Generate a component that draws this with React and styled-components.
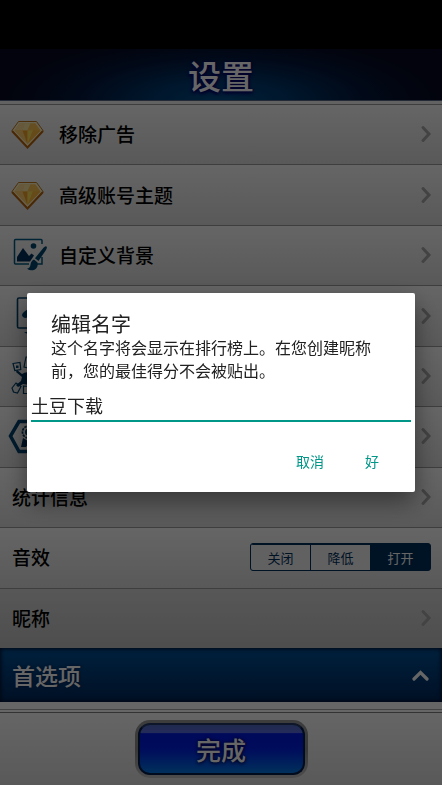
import { useState } from "react";
import styled, { createGlobalStyle } from "styled-components";

const GlobalStyle = createGlobalStyle`
  * {
    box-sizing: border-box;
  }

  body {
    margin: 0;
    background: #fff;
    font-family: "Noto Sans CJK SC", "Noto Sans", sans-serif;
  }

  button, input {
    font-family: inherit;
  }
`;

const Screen = styled.div`
  min-height: 100vh;
  display: flex;
  flex-direction: column;
`;

const StatusBar = styled.div`
  height: 49px;
  background: #000;
`;

const Header = styled.header`
  height: 55px;
  display: flex;
  align-items: center;
  justify-content: center;
  background: radial-gradient(
    ellipse 50% 130% at 50% 100%,
    #00508c,
    #003a70 30%,
    #04173c 65%,
    #06081e 100%
  );
  border-bottom: 3px solid #f4f4f4;
  box-shadow: inset 0 -1px 0 #5a6c88;
`;

const Title = styled.h1`
  margin: 0;
  font-size: 33px;
  font-weight: 500;
  line-height: 48px;
  color: #fff;
  text-shadow: 0 0 3px #00006c, 0 1px 3px #00006c, 0 2px 4px #00006c;
`;

const List = styled.ul`
  flex: 1;
  margin: 0;
  padding: 0;
  list-style: none;
  display: grid;
  grid-auto-rows: minmax(56px, 1fr);
`;

const Row = styled.li`
  display: flex;
  align-items: center;
  padding: 0 11px 1px 12px;
  border-top: 1px solid #9c9c9c;
  background: ${(props) =>
    props.$dim
      ? "linear-gradient(#dadada, #c2c2c2)"
      : "linear-gradient(#fdfdfd, #dedede)"};
`;

const RowLink = styled.a`
  flex: 1;
  display: flex;
  align-items: center;
  color: #000;
  text-decoration: none;
`;

const RowLabel = styled.span`
  flex: 1;
  font-size: 19px;
  font-weight: 500;
  line-height: 28px;
  color: #000;
`;

const IconBox = styled.svg`
  width: 36px;
  height: 36px;
  margin-right: 11px;
  overflow: visible;
  flex-shrink: 0;
`;

const ArrowSvg = styled.svg`
  width: 10px;
  height: 18px;
  overflow: visible;
`;

const Segments = styled.div`
  display: flex;
  width: 181px;
  height: 28px;
  border: 1px solid #00305e;
  border-radius: 3px;
  background: #00305e;
  overflow: hidden;
  gap: 1px;
`;

const Segment = styled.button`
  flex: 1;
  padding: 0;
  border: 1px solid #00305e;
  border-width: 1px 0 0;
  font-size: 13px;
  font-weight: 400;
  line-height: 24px;
  color: ${(props) => (props.$active ? "#fff" : "#00305e")};
  background: ${(props) => (props.$active ? "#00305e" : "#f2f2f2")};
`;

const Section = styled.button`
  height: 54px;
  display: flex;
  align-items: center;
  justify-content: space-between;
  padding: 0 13px 0 12px;
  border: 0;
  background: linear-gradient(#005298, #00285c);
  box-shadow: inset 0 0 4px 1px #001030;
  font-size: 23px;
  font-weight: 500;
  color: #fff;
  text-shadow: 0 0 3px #00184c;
`;

const Footer = styled.footer`
  margin-top: 7px;
  padding-top: 2px;
  border-top: 1px solid #a8a8a8;
`;

const FooterBar = styled.div`
  height: 73px;
  display: flex;
  align-items: center;
  justify-content: center;
  border-top: 1px solid #808080;
  background: linear-gradient(#fdfdfd, #dedede);
`;

const DoneFrame = styled.div`
  padding: 3px;
  border-radius: 15px;
  background: linear-gradient(#9a9a9a, #8c8c8c 50%, #c0c0c0);
`;

const DoneButton = styled.button`
  display: block;
  width: 167px;
  height: 52px;
  padding: 0;
  border: 2px solid #001c4c;
  border-top-color: #223a66;
  border-radius: 12px;
  background: linear-gradient(
    #5068c0,
    #5a6ce0 16%,
    #0018e0 18%,
    #001ee6 50%,
    #0078e4 100%
  );
  font-size: 25px;
  font-weight: 500;
  line-height: 46px;
  color: #fff;
  text-shadow: 0 0 3px #00004c, 0 1px 4px #00004c;
`;

const Scrim = styled.div`
  position: fixed;
  inset: 0;
  display: flex;
  align-items: center;
  justify-content: center;
  padding: 0 27px;
  background: rgba(0, 0, 0, 0.6);
`;

const Dialog = styled.div`
  width: 100%;
  max-width: 560px;
  padding: 18px 4px 12px;
  border-radius: 2px;
  background: #fff;
  box-shadow: 0 10px 24px rgba(0, 0, 0, 0.45);
`;

const DialogText = styled.div`
  padding: 0 20px;
`;

const DialogTitle = styled.h2`
  margin: 0;
  font-size: 20px;
  font-weight: 400;
  line-height: 25px;
  color: #212121;
`;

const Message = styled.p`
  margin: 0;
  font-size: 16px;
  line-height: 23px;
  color: #212121;
`;

const NameInput = styled.input`
  display: block;
  width: 100%;
  height: 32px;
  margin-top: 8px;
  padding: 0;
  border: 0;
  border-bottom: 2px solid #009688;
  border-radius: 0;
  outline: 0;
  background: transparent;
  font-size: 18px;
  color: #212121;
`;

const Actions = styled.div`
  display: flex;
  justify-content: flex-end;
  padding: 21px 8px 1px 0;
`;

const ActionButton = styled.button`
  min-width: 62px;
  height: 36px;
  padding: 0 17px;
  border: 0;
  background: none;
  font-size: 14px;
  color: #009688;
`;

const navy = "#00466f";

function DiamondIcon() {
  return (
    <IconBox viewBox="0 0 36 36" aria-hidden="true">
      <path
        d="M6.500 5.500h18L31 14.500 15.500 31 0 14.500z"
        fill="#fff4cc"
        stroke="#c07818"
      />
      <path d="M7.500 7.500h16l5 7-13 13.500-13-13.500z" fill="#ffc24c" />
      <path d="M7.500 7.500h5l-2 7h-8z" fill="#ffdc94" />
      <path d="M12.500 7.500h6l-3 7h-5z" fill="#ffe8a4" />
      <path d="M18.500 7.500h5l-2.500 7h-5.500z" fill="#ffc458" />
      <path d="M2.500 14.500h8l5 13.500z" fill="#ffd070" />
      <path d="M10.500 14.500h5V28z" fill="#f4a42c" />
      <path d="M15.500 14.500H21L15.500 28z" fill="#ffe058" />
      <path d="M21 14.500h7.500l-13 13.500z" fill="#ffb83c" />
      <path
        d="M0 15l15.500 16.500L31 15"
        fill="none"
        stroke="#b86408"
        strokeWidth="2"
      />
    </IconBox>
  );
}

function BackgroundIcon() {
  return (
    <IconBox viewBox="0 0 36 36" aria-hidden="true">
      <path
        d="M30 7V3.500Q30 2.500 29 2.500H3.500Q2.500 2.500 2.500 3.500V26Q2.500 27 3.500 27H17"
        fill="none"
        stroke="#005a80"
        strokeWidth="1.500"
      />
      <path d="M30 20v7h-5" fill="none" stroke="#005a80" strokeWidth="1.500" />
      <circle cx="21.500" cy="9" r="2.800" fill={navy} />
      <path d="M5 24.500V20l6-9 6 8 2.500-2.500 2.500 2-4 6z" fill="#00305e" />
      <path
        d="M34.500 9.500q1 1-.5 3.500l-7.500 11-3.500-2.800 8.500-10.500q2-2.200 3-1.200z"
        fill={navy}
      />
      <path
        d="M22 22.500l3.500 3q1 5-3 7.200-4 1.700-7.500-1 3-.7 3.500-4 .5-4 3.500-5.200z"
        fill={navy}
      />
    </IconBox>
  );
}

function CardBackIcon() {
  return (
    <IconBox viewBox="0 0 36 36" aria-hidden="true">
      <rect
        x="5.500"
        y="0"
        width="27"
        height="30"
        rx="1.500"
        fill="none"
        stroke="#00406a"
        strokeWidth="1.600"
      />
      <path
        d="M19 7q-2 4-6.500 6.500-4 3-1.500 5.500 3 2 6-.5l-1 4h6l-1-4q3 2.500 6 .5 2.500-2.500-1.500-5.500Q21 11 19 7z"
        fill={navy}
      />
      <path d="M12 34.500l4-1v2.500z" fill={navy} />
    </IconBox>
  );
}

function PlayersIcon() {
  return (
    <IconBox viewBox="0 0 36 36" aria-hidden="true">
      <g fill="none" stroke="#00406a" strokeWidth="1.200">
        <path d="M1 5.500l7-1 .8 7-6 1z" />
        <path d="M0 30l4-5 5 3.500-3.500 6.500-4-1z" />
        <path d="M11.500 28l7 .5v7h-7z" />
        <path d="M12 9l2-10h7v12z" />
      </g>
      <path d="M4 7.500h2.500V10H4z" fill={navy} />
      <path
        d="M5 12l5 4q4-3 9-1l6-5 2 3-6 6v6l5 6-3 2-6-6-6-1-5 3-2-2 5-4 1-4-6-5z"
        fill="#00365e"
      />
    </IconBox>
  );
}

function BadgeIcon() {
  return (
    <IconBox viewBox="0 0 36 36" aria-hidden="true">
      <path
        d="M7 3.500h19L35 18l-9 15.500H7L-1.500 18z"
        fill="none"
        stroke="#004472"
        strokeWidth="3.500"
      />
      <circle
        cx="16.500"
        cy="14"
        r="6"
        fill="none"
        stroke="#00365e"
        strokeWidth="1.800"
        strokeDasharray="2.500 .8"
      />
      <circle cx="16.500" cy="14" r="3.500" fill={navy} />
      <path d="M11 20l5 3 6-3 3 9h-5l-3-4-3 4H9z" fill="#00305e" />
    </IconBox>
  );
}

function Arrow() {
  return (
    <ArrowSvg viewBox="0 0 10 18" aria-hidden="true">
      <path
        d="M2 2.500l6 6.500-6 6.500"
        fill="none"
        stroke="#a8a8a8"
        strokeWidth="3"
        strokeLinecap="round"
      />
    </ArrowSvg>
  );
}

const items = [
  { label: "移除广告", Icon: DiamondIcon },
  { label: "高级账号主题", Icon: DiamondIcon },
  { label: "自定义背景", Icon: BackgroundIcon },
  { label: "", Icon: CardBackIcon },
  { label: "", Icon: PlayersIcon },
  { label: "", Icon: BadgeIcon },
  { label: "统计信息" },
];

const volumes = ["关闭", "降低", "打开"];

export default function App() {
  const [volume, setVolume] = useState("打开");
  const [name, setName] = useState("土豆下载");

  return (
    <>
      <GlobalStyle />
      <Screen>
        <StatusBar />
        <Header>
          <Title>设置</Title>
        </Header>

        <List>
          {items.map(({ label, Icon }, index) => (
            <Row key={index}>
              <RowLink href="#">
                {Icon && <Icon />}
                <RowLabel>{label}</RowLabel>
                <Arrow />
              </RowLink>
            </Row>
          ))}
          <Row>
            <RowLabel id="volume">音效</RowLabel>
            <Segments role="group" aria-labelledby="volume">
              {volumes.map((item) => (
                <Segment
                  key={item}
                  type="button"
                  $active={item === volume}
                  aria-pressed={item === volume}
                  onClick={() => setVolume(item)}
                >
                  {item}
                </Segment>
              ))}
            </Segments>
          </Row>
          <Row $dim>
            <RowLink href="#">
              <RowLabel>昵称</RowLabel>
              <Arrow />
            </RowLink>
          </Row>
        </List>

        <Section type="button" aria-expanded="true">
          首选项
          <svg width="17" height="11" viewBox="0 0 17 11" aria-hidden="true">
            <path
              d="M2 9l6.500-6.500L15 9"
              fill="none"
              stroke="#fff"
              strokeWidth="3.200"
              strokeLinecap="round"
            />
          </svg>
        </Section>

        <Footer>
          <FooterBar>
            <DoneFrame>
              <DoneButton type="button">完成</DoneButton>
            </DoneFrame>
          </FooterBar>
        </Footer>
      </Screen>

      <Scrim>
        <Dialog role="dialog" aria-modal="true" aria-labelledby="dialog-title">
          <DialogText>
            <DialogTitle id="dialog-title">编辑名字</DialogTitle>
            <Message id="dialog-message">
              这个名字将会显示在排行榜上。在您创建昵称前，您的最佳得分不会被贴出。
            </Message>
          </DialogText>
          <NameInput
            type="text"
            aria-labelledby="dialog-title"
            aria-describedby="dialog-message"
            value={name}
            onChange={(e) => setName(e.target.value)}
          />
          <Actions>
            <ActionButton type="button">取消</ActionButton>
            <ActionButton type="button">好</ActionButton>
          </Actions>
        </Dialog>
      </Scrim>
    </>
  );
}
